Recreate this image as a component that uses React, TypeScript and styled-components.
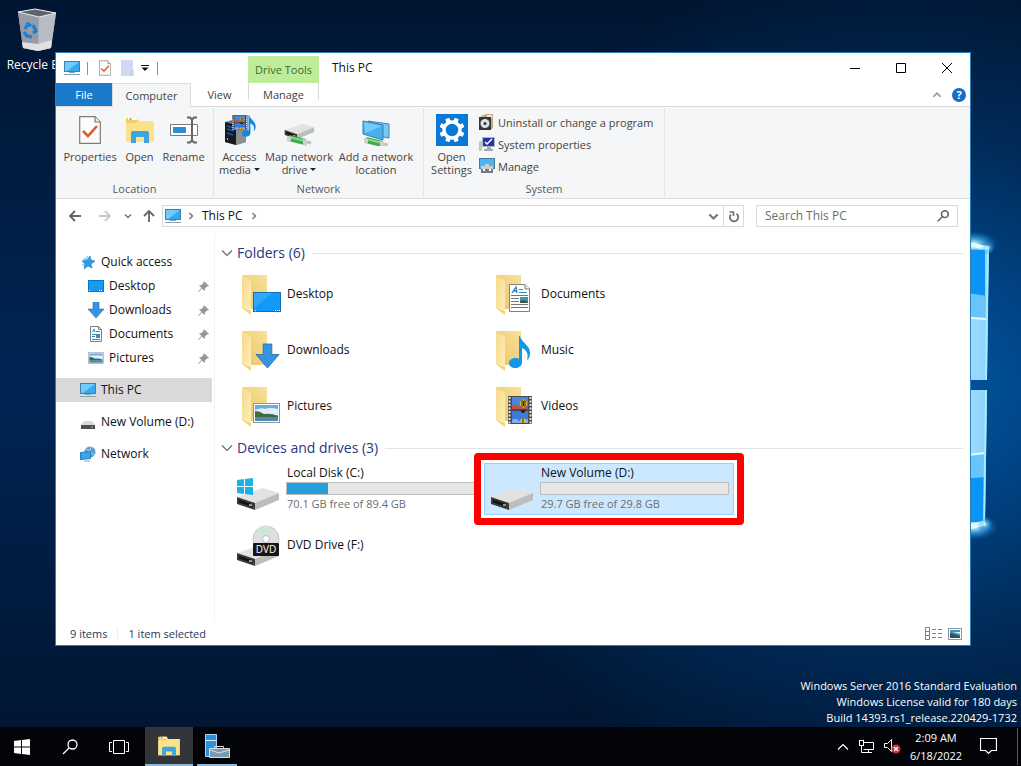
import React from "react";
import styled, { createGlobalStyle, css } from "styled-components";

const GlobalStyle = createGlobalStyle`
  *, *::before, *::after { box-sizing: border-box; }
  body { margin: 0; font-family: "Open Sans", "Noto Sans", sans-serif; font-size: 12px; color: #111; }
  button, input { font: inherit; color: inherit; }
  button { background: none; border: 0; padding: 0; cursor: default; }
  svg { display: block; flex: none; }
  a { color: inherit; text-decoration: none; }
  ul { list-style: none; margin: 0; padding: 0; }
`;

/* ---------- desktop ---------- */
const Desktop = styled.div`
  position: relative;
  display: flex;
  flex-direction: column;
  min-height: 100vh;
  overflow: hidden;
  background: #00152f;
`;
const WallpaperLayer = styled.svg`
  position: absolute;
  inset: 0;
  width: 100%;
  height: 100%;
`;
const DesktopShortcut = styled.button`
  position: absolute;
  left: 0;
  top: 7px;
  width: 76px;
  display: flex;
  flex-direction: column;
  align-items: center;
  gap: 4px;
  color: #fff;
  line-height: 16px;
  white-space: nowrap;
`;
const Watermark = styled.div`
  position: relative;
  height: 81px;
  padding: 32px 4px 0 0;
  text-align: right;
  color: #fff;
  font-size: 11px;
  line-height: 16px;
  p { margin: 0; }
`;

/* ---------- window frame ---------- */
const Window = styled.main`
  position: relative;
  flex: 1;
  display: flex;
  flex-direction: column;
  margin: 52px 50px 0 55px;
  border: 1px solid #2b7fb8;
  background: #fff;
`;
const TitleBar = styled.header`
  display: flex;
  height: 30px;
`;
const QuickTools = styled.div`
  display: flex;
  align-items: center;
  width: 192px;
  padding-left: 8px;
`;
const ToolButton = styled.button<{ $gap?: number }>`
  margin-left: ${(p) => p.$gap ?? 0}px;
`;
const ToolSeparator = styled.span<{ $gap: number }>`
  width: 1px;
  height: 13px;
  margin-left: ${(p) => p.$gap}px;
  background: #8f8f8f;
`;
const ContextLabel = styled.div`
  width: 71px;
  margin-top: 3px;
  background: #bdec9b;
  color: #3f6b2c;
  font-size: 11px;
  line-height: 28px;
  text-align: center;
  white-space: nowrap;
`;
const WindowTitle = styled.h1`
  flex: 1;
  margin: 0;
  padding-left: 13px;
  font-size: 12px;
  font-weight: 400;
  line-height: 30px;
  color: #111;
`;
const CaptionButton = styled.button`
  display: grid;
  place-items: center;
  width: 46px;
  height: 30px;
`;
const TabRow = styled.nav`
  display: flex;
  height: 24px;
  border-bottom: 1px solid #dadbdc;
  color: #444;
  font-size: 11px;
`;
const Tab = styled.button<{ $kind: "file" | "active" | "plain" | "context"; $width: number }>`
  width: ${(p) => p.$width}px;
  height: 24px;
  line-height: 24px;
  text-align: center;
  ${(p) => p.$kind === "file" && css`background: #1979ca; color: #fff; height: 23px;`}
  ${(p) =>
    p.$kind === "active" &&
    css`background: #f5f6f7; border: 1px solid #dadbdc; border-bottom: 0; line-height: 22px;`}
  ${(p) =>
    p.$kind === "context" &&
    css`display: flex; justify-content: center; height: 17px; border: solid #dadbdc; border-width: 0 1px;`}
`;
const TabTools = styled.div`
  display: flex;
  align-items: center;
  gap: 10px;
  margin-left: auto;
  padding-right: 4px;
`;

/* ---------- ribbon ---------- */
const Ribbon = styled.section`
  display: flex;
  height: 92px;
  padding: 1px 0;
  background: #f5f6f7;
  border-bottom: 1px solid #dadbdc;
  color: #444;
  font-size: 11px;
`;
const RibbonGroup = styled.div<{ $width: number }>`
  display: flex;
  flex-direction: column;
  width: ${(p) => p.$width}px;
  border-right: 1px solid #e2e3e4;
`;
const RibbonItems = styled.div`
  display: flex;
  flex: 1;
  padding: 6px 4px 0;
`;
const RibbonCaption = styled.div`
  line-height: 17px;
  color: #5a5a5a;
  text-align: center;
`;
const BigButton = styled.button<{ $width: number }>`
  display: flex;
  flex-direction: column;
  align-items: center;
  gap: 4px;
  width: ${(p) => p.$width}px;
  line-height: 13px;
  white-space: nowrap;
`;
const Caret = styled.span`
  display: inline-block;
  margin-left: 3px;
  border: 3px solid transparent;
  border-top-color: #222;
  border-bottom: 0;
  vertical-align: 3px;
`;
const SmallList = styled.div`
  display: flex;
  flex-direction: column;
  padding-left: 4px;
  margin-top: -3px;
`;
const SmallButton = styled.button`
  display: flex;
  align-items: center;
  gap: 3px;
  height: 22px;
  white-space: nowrap;
`;

/* ---------- address bar ---------- */
const AddressRow = styled.div`
  display: flex;
  align-items: center;
  height: 34px;
  padding: 0 12px 0 12px;
`;
const NavButtons = styled.div`
  display: flex;
  align-items: center;
  width: 94px;
`;
const NavButton = styled.button<{ $gap?: number }>`
  margin-left: ${(p) => p.$gap ?? 0}px;
`;
const AddressBox = styled.div`
  display: flex;
  flex: 1;
  align-items: center;
  height: 22px;
  border: 1px solid #d9d9d9;
`;
const Breadcrumb = styled.nav`
  display: flex;
  flex: 1;
  align-items: center;
`;
const Crumb = styled.a`
  margin: 0 7px 2px 4px;
`;
const AddressButton = styled.button<{ $width?: number; $divided?: boolean }>`
  display: grid;
  place-items: center;
  width: ${(p) => p.$width ?? 20}px;
  height: 20px;
  ${(p) => p.$divided && css`border-left: 1px solid #d9d9d9;`}
`;
const SearchBox = styled.label`
  display: flex;
  align-items: center;
  width: 202px;
  height: 22px;
  margin-left: 12px;
  padding: 0 8px 0 8px;
  border: 1px solid #d9d9d9;
`;
const SearchInput = styled.input`
  flex: 1;
  min-width: 0;
  padding: 0 0 2px;
  border: 0;
  outline: 0;
  background: none;
  &::placeholder { color: #6d6d6d; opacity: 1; }
`;

/* ---------- body ---------- */
const Body = styled.div`
  display: flex;
  flex: 1;
`;
const Sidebar = styled.nav`
  width: 159px;
  padding: 17px 2px 0 0;
  border-right: 1px solid #f3f3f3;
`;
const NavGroup = styled.ul`
  margin-bottom: 8px;
`;
const NavItem = styled.a<{ $indent?: boolean; $active?: boolean }>`
  display: flex;
  align-items: center;
  gap: 5px;
  height: 24px;
  padding: 0 3px 0 ${(p) => (p.$indent ? 32 : 24)}px;
  background: ${(p) => (p.$active ? "#d9d9d9" : "transparent")};
  white-space: nowrap;
`;
const NavLabel = styled.span`
  flex: 1;
  padding-bottom: 2px;
`;
const Listing = styled.section`
  flex: 1;
  padding: 8px 7px 0 6px;
`;
const GroupHeading = styled.h2`
  display: flex;
  align-items: center;
  height: 24px;
  margin: 0 0 3px;
  font-size: 14px;
  font-weight: 400;
  color: #26387f;
  white-space: nowrap;
  svg { margin-right: 4px; }
  &::after { content: ""; flex: 1; height: 1px; margin-left: 7px; background: #e2e2e2; }
`;
const HeadingText = styled.span`
  padding-bottom: 2px;
`;
const TileGrid = styled.div`
  display: grid;
  grid-template-columns: repeat(auto-fill, 250px);
  grid-auto-rows: 52px;
  gap: 4px;
  margin: 0 0 4px 9px;
`;
const Tile = styled.a<{ $selected?: boolean }>`
  position: relative;
  display: flex;
  align-items: center;
  gap: 3px;
  padding: 0 4px 0 5px;
  border: 1px solid ${(p) => (p.$selected ? "#99d1ff" : "transparent")};
  background: ${(p) => (p.$selected ? "#cce8ff" : "transparent")};
`;
const HighlightFrame = styled.span`
  position: absolute;
  inset: -11px;
  z-index: 1;
  border: 7px solid #fe0000;
  border-radius: 4px;
`;
const DriveInfo = styled.div`
  flex: 1;
  padding-bottom: 2px;
  line-height: 16px;
`;
const DriveName = styled.div`
  padding-left: 1px;
`;
const DriveBar = styled.div`
  height: 13px;
  margin: 1px 0;
  border: 1px solid #bcbcbc;
  background: #e6e6e6;
`;
const DriveFill = styled.div`
  height: 100%;
  background: #26a0da;
`;
const DriveSpace = styled.div`
  padding-left: 1px;
  font-size: 11px;
  color: #6d6d6d;
`;
const TileName = styled.span`
  padding: 0 0 2px 1px;
`;
const StatusBar = styled.footer`
  display: flex;
  align-items: center;
  height: 23px;
  padding: 0 8px 0 14px;
  color: #1e395b;
  font-size: 11px;
`;
const StatusText = styled.span<{ $divided?: boolean }>`
  line-height: 14px;
  ${(p) => p.$divided && css`margin-left: 10px; padding-left: 10px; border-left: 1px solid #eee;`}
`;
const ViewButtons = styled.div`
  display: flex;
  gap: 6px;
  margin-left: auto;
`;

/* ---------- taskbar ---------- */
const Taskbar = styled.footer`
  position: relative;
  display: flex;
  align-items: center;
  height: 39px;
  background: #020408;
  color: #fff;
`;
const TaskButton = styled.button<{ $width?: number; $active?: boolean; $running?: boolean }>`
  display: grid;
  place-items: center;
  width: ${(p) => p.$width ?? 48}px;
  height: 39px;
  ${(p) => p.$active && css`margin-left: 3px; background: #333538; border-bottom: 2px solid #8ab9dd;`}
  ${(p) =>
    p.$running &&
    css`background: linear-gradient(#8ab9dd, #8ab9dd) center bottom / 40px 2px no-repeat;`}
`;
const Tray = styled.div`
  display: flex;
  align-items: center;
  gap: 9px;
  height: 100%;
  margin-left: auto;
  padding-right: 2px;
`;
const Clock = styled.time`
  width: 52px;
  font-size: 11px;
  line-height: 18px;
  text-align: center;
  white-space: nowrap;
`;
const ActionButton = styled.button`
  margin: 0 11px 0 9px;
`;
const ShowDesktop = styled.button`
  width: 2px;
  height: 37px;
  border-left: 1px solid #55595e;
`;

/* ---------- drawings ---------- */
const Wallpaper = () => (
  <WallpaperLayer viewBox="0 0 1021 766" preserveAspectRatio="xMaxYMid slice" aria-hidden>
    <defs>
      <radialGradient id="glow" gradientUnits="userSpaceOnUse" cx="900" cy="385" r="520" gradientTransform="translate(0 77) scale(1 .8)">
        <stop offset="0" stopColor="#0062b0" />
        <stop offset=".3" stopColor="#00478a" />
        <stop offset=".6" stopColor="#002d5c" />
        <stop offset="1" stopColor="#001632" />
      </radialGradient>
      <linearGradient id="base" x1="0" x2="0" y1="0" y2="1">
        <stop offset="0" stopColor="#001632" />
        <stop offset=".5" stopColor="#002554" />
        <stop offset="1" stopColor="#00142e" />
      </linearGradient>
      <radialGradient id="flare">
        <stop offset="0" stopColor="#fff" />
        <stop offset=".25" stopColor="#7fd8ff" stopOpacity=".85" />
        <stop offset="1" stopColor="#0080e0" stopOpacity="0" />
      </radialGradient>
      <linearGradient id="pane" x1="0" x2="1" y1="0" y2="0">
        <stop offset="0" stopColor="#a9e0ff" />
        <stop offset="1" stopColor="#8ad3fd" />
      </linearGradient>
    </defs>
    <rect width="1021" height="766" fill="url(#base)" />
    <ellipse cx="900" cy="385" rx="520" ry="416" fill="url(#glow)" opacity=".9" />
    <ellipse cx="974" cy="244" rx="24" ry="13" fill="url(#flare)" />
    <ellipse cx="974" cy="527" rx="24" ry="13" fill="url(#flare)" />
    <path d="M960 241 989 247 987 380H960Z" fill="url(#pane)" />
    <path d="M960 249 985 250V296L960 292Z" fill="#0b93f5" />
    <path d="M960 292 986 296V319L960 317Z" fill="#68c5fb" />
    <path d="M960 317 986 319" stroke="#e4fbff" strokeWidth="2" />
    <path d="M960 243 988 248" fill="none" stroke="#e6fbff" strokeWidth="4" />
    <path d="M988 247 987 300 986 380" fill="none" stroke="#a9eaff" strokeWidth="2" />
    <path d="M960 390H987L985 525 960 530Z" fill="url(#pane)" />
    <path d="M960 456 985 453V477L960 479Z" fill="#68c5fb" />
    <path d="M960 479 985 477V522H960Z" fill="#0b93f5" />
    <path d="M960 456 985 453" stroke="#e4fbff" strokeWidth="2" />
    <path d="M986 390 985 460 984 524" fill="none" stroke="#a9eaff" strokeWidth="2" />
    <path d="M985 523 960 529" fill="none" stroke="#e6fbff" strokeWidth="5" />
    <circle cx="988" cy="248" r="7" fill="url(#flare)" opacity=".7" />
    <circle cx="985" cy="524" r="8" fill="url(#flare)" opacity=".8" />
  </WallpaperLayer>
);

const RecycleBin = () => (
  <svg width="42" height="46" viewBox="2 0 42 46">
    <path d="M3 5 20 2 41 6 36 41 23 44 8 41Z" fill="#a4abb4" />
    <path d="M3 5 24 10 23 44 8 41Z" fill="#959ca7" />
    <path d="M24 10 41 6 36 41 23 44Z" fill="#b7bcc2" />
    <path d="M7 35 23 37 37 33 36 41 23 44 8 41Z" fill="#dfe0df" />
    <path d="M3 5 20 2 41 6 24 10Z" fill="#5d646d" stroke="#e9ecef" />
    <g fill="none" stroke="#1d80d2" strokeWidth="3.4">
      <path d="m10 22 3-5 3 2M18 18l3 6-3 2M17 30l-5-1-3-4" />
    </g>
  </svg>
);

const Monitor = ({ size = 16 }: { size?: number }) => (
  <svg width={size} height={size} viewBox="0 0 16 16">
    <rect x=".5" y="1.5" width="15" height="10" fill="#35a9f0" stroke="#3f7fa8" />
    <path d="M1 2h14L3 11H1Z" fill="#6fcbfb" />
    <path d="M5 12.500h6M0 14.500h16" stroke="#8aa4b4" />
  </svg>
);

const CheckPage = ({ w, h }: { w: number; h: number }) => (
  <svg width={w} height={h} viewBox="0 0 22 28">
    <path d="M.7.7H16L21.3 6v21.3H.7Z" fill="#fcfcfc" stroke="#7c7c7c" strokeWidth="1.2" />
    <path d="M16 .7V6h5.3" fill="#eee" stroke="#7c7c7c" strokeWidth="1.2" />
    <path d="m4 15 5 5 9-10" fill="none" stroke="#d9602b" strokeWidth="2.6" />
  </svg>
);

const NewFolder = () => (
  <svg width="13" height="16" viewBox="0 0 13 16">
    <path d="M0 0h12v10h1v6H0Z" fill="#cfdcf0" />
    <path d="M10 10v6" stroke="#b9cbe6" />
  </svg>
);

const Explorer = ({ w, h }: { w: number; h: number }) => (
  <svg width={w} height={h} viewBox="0 0 28 26">
    <path d="M0 1h11l2 3h15v21H0Z" fill="#f3cf62" />
    <path d="M2 1h9v2H2Z" fill="#fff" />
    <path d="M3 2h3" stroke="#3a9c5e" />
    <path d="M0 6h10l2-2h16v21H0Z" fill="#fde28d" />
    <path d="M5 26V16q0-2 2-2h14q2 0 2 2v10h-5v-6h-8v6Z" fill="#3fa5d8" />
  </svg>
);

const RenameIcon = () => (
  <svg width="30" height="32" viewBox="0 0 30 32">
    <path d="M1.500 10.500h27v11h-27Z" fill="#fff" stroke="#7b7b7b" />
    <rect x="4" y="13" width="13" height="6" fill="#2b8fd6" />
    <path d="M18 3.500h3l2 2 2-2h3M18 28.500h3l2-2 2 2h3M23 5v22" fill="none" stroke="#666" strokeWidth="2" />
  </svg>
);

const MusicNote = ({ fill = "#1297e8" }: { fill?: string }) => (
  <path d="M11 0c1 6 10 9 10 17 0 3-1 6-3 7 2-7-1-10-5-12v14c0 4-3 6-7 6-3 0-6-2-6-5s3-5 7-5c1 0 2 0 3 1V0Z" fill={fill} />
);

const FilmStrip = () => (
  <>
    <rect width="24" height="28" fill="#4a4b4d" />
    <path d="M1.500 1v27M22.500 1v27" stroke="#e6e6e6" strokeWidth="2" strokeDasharray="2 1.500" />
    <rect x="4" y="1" width="16" height="12" fill="#4a86e0" />
    <rect x="4" y="15" width="16" height="12" fill="#3b7ae0" />
    <path d="M4 9q4-2 8 2l8-1v3H4Z" fill="#bf514f" />
    <path d="M4 24q4-3 7 1l9-2v4H4Z" fill="#85aee8" />
    <ellipse cx="15.500" cy="7.500" rx="3.500" ry="4" fill="#f0c022" />
    <path d="M14 4v7M17 4v7M15.500 5v5" stroke="#34220d" />
    <path d="M12 14h6l-2 3h-2Z" fill="#34220d" />
    <circle cx="15" cy="24.500" r="2.500" fill="#efc02a" />
    <path d="M15 22v5" stroke="#34220d" />
  </>
);

const AccessMedia = () => (
  <svg width="32" height="32" viewBox="0 0 32 32">
    <path d="M1 8 12 5 22 8V28L12 31 1 28Z" fill="#6f7277" />
    <path d="M1 8 12 11V31L1 28Z" fill="#17191e" />
    <path d="M12 11 22 8V28L12 31Z" fill="#8c9095" />
    <path d="m3 12 7 2M3 15l7 2M3 19l6 2" stroke="#1659c8" strokeWidth="1.500" />
    <path d="M3 25h1" stroke="#41dbff" strokeWidth="2" />
    <g transform="translate(8 1) scale(.65 .54)"><FilmStrip /></g>
    <g transform="translate(18 1) scale(.65 .68)"><MusicNote fill="#1687df" /></g>
  </svg>
);

const DriveShape = () => (
  <>
    <path d="M1 20 27 11 43 16 19 27Z" fill="#e2e2e2" />
    <path d="M1 20 19 26v7L1 27Z" fill="#3a3a3a" />
    <path d="m19 26 24-10v7L19 33Z" fill="#bdbdbd" />
    <path d="m3 22.500 13 4.500v3L3 25.500Z" fill="#141414" />
    <path d="M13 28h3" stroke="#58b868" strokeWidth="2" />
  </>
);

const NetPipe = () => (
  <g>
    <path d="M5 23 21 27" stroke="#3fa850" strokeWidth="6" />
    <path d="M5 22 21 26" stroke="#86d88e" strokeWidth="2" />
    <path d="m3 21 4 1v5l-4-1ZM19 24l4 1v6l-4-1Z" fill="#c9d2cc" />
    <path d="m23 27 4 1" stroke="#bcc6bf" strokeWidth="3" />
  </g>
);

const MapDrive = () => (
  <svg width="34" height="32" viewBox="0 0 34 32">
    <g transform="translate(2 2) scale(.7)"><DriveShape /></g>
    <g transform="translate(2 1)"><NetPipe /></g>
  </svg>
);

const NetLocation = () => (
  <svg width="32" height="32" viewBox="0 0 32 32">
    <path d="m8 7 21 3v14L8 20Z" fill="#79caf5" stroke="#3689b8" />
    <path d="m3 7 20 4v15L3 20Z" fill="#49b0ee" stroke="#2f7fad" />
    <path d="m4 8 18 4L5 19Z" fill="#76cbf7" />
    <g transform="translate(1 3)"><NetPipe /></g>
  </svg>
);

const SettingsGear = () => (
  <svg width="32" height="32" viewBox="0 0 32 32">
    <rect width="32" height="32" fill="#0a78d6" />
    <circle cx="16" cy="16" r="8" fill="none" stroke="#fff" strokeWidth="3.500" />
    {[0, 45, 90, 135, 180, 225, 270, 315].map((a) => (
      <path key={a} d="M13.500 8 14 3.500h4L18.500 8Z" fill="#fff" transform={`rotate(${a + 22.5} 16 16)`} />
    ))}
  </svg>
);

const UninstallIcon = () => (
  <svg width="16" height="16" viewBox="0 0 16 16">
    <path d="M2 2 7 0h7v14l-3 2Z" fill="#c9a877" />
    <path d="M8 1h5v3H8Z" fill="#dfeef6" />
    <rect x="0" y="3" width="12" height="13" fill="#343638" />
    <circle cx="6" cy="9.500" r="4.500" fill="#dfe2e4" />
    <circle cx="6" cy="9.500" r="1.500" fill="#333" />
  </svg>
);
const SystemIcon = () => (
  <svg width="16" height="16" viewBox="0 0 16 16">
    <rect x="0" y="5" width="3" height="10" fill="#c1c4c8" />
    <rect x="3.500" y="1.500" width="12" height="9" fill="#2634a5" stroke="#b5bac2" />
    <path d="m6 6 2 2 5-5" fill="none" stroke="#fff" strokeWidth="1.500" />
    <path d="M8 11h4v2h2v2H5v-2h3Z" fill="#a6a9b0" />
  </svg>
);
const ManageIcon = () => (
  <svg width="16" height="16" viewBox="0 0 16 16">
    <rect x=".5" y=".5" width="15" height="10" fill="#4db5ed" stroke="#457b9c" />
    <path d="M2 8h12v7H2Z" fill="#737b82" />
    <path d="M2 8h12v3H2ZM6 6h4v2H6Z" fill="#c7cdd1" />
    <path d="M5 11v2M11 11v2" stroke="#fff" strokeWidth="2" />
  </svg>
);

const Arrow = ({ turn = 0, color = "#666" }: { turn?: number; color?: string }) => (
  <svg width="14" height="14" viewBox="0 0 14 14">
    <path d="M13 7H2M7 2 2 7l5 5" fill="none" stroke={color} strokeWidth="1.800" transform={`rotate(${turn} 7 7)`} />
  </svg>
);
const Chevron = ({ w = 8, turn = 0, color = "#777", weight = 1.5 }: { w?: number; turn?: number; color?: string; weight?: number }) => (
  <svg width={w} height={w} viewBox="0 0 8 8">
    <path d="m1 2.500 3 3 3-3" fill="none" stroke={color} strokeWidth={weight} transform={`rotate(${turn} 4 4)`} />
  </svg>
);
const WideChevron = ({ turn = 0, color = "#6b6b6b" }: { turn?: number; color?: string }) => (
  <svg width="12" height="8" viewBox="0 0 12 8">
    <path d="m1 1.500 5 5 5-5" fill="none" stroke={color} strokeWidth="1.200" transform={`rotate(${turn} 6 4)`} />
  </svg>
);
const Refresh = () => (
  <svg width="12" height="13" viewBox="0 0 12 13">
    <path d="M2.800 4.500a4.200 4.200 0 1 0 5.700-.8" fill="none" stroke="#707070" strokeWidth="1.800" />
    <path d="M1.500 2h4v4" fill="none" stroke="#707070" strokeWidth="1.600" />
  </svg>
);
const Magnifier = ({ size, color, weight }: { size: number; color: string; weight: number }) => (
  <svg width={size} height={size} viewBox="0 0 16 16">
    <circle cx="10.500" cy="5.500" r="4.500" fill="none" stroke={color} strokeWidth={weight} />
    <path d="M7 9 1 15" stroke={color} strokeWidth={weight} />
  </svg>
);

const Star = () => (
  <svg width="16" height="16" viewBox="0 0 16 16">
    <path d="m10 2 1 4 4 1-4 3 1 4-4-2-4 3 1-5-3-3 5-1Z" fill="#2d9be6" stroke="#1e7dc4" strokeWidth=".6" />
    <path d="M3 5h4M2 11h3M6 3h2" stroke="#4aaced" />
  </svg>
);
const DesktopIcon = () => (
  <svg width="16" height="16" viewBox="0 0 16 16">
    <rect x=".5" y="2.500" width="15" height="11" fill="#169bf5" stroke="#0f74bd" />
    <path d="M1 12.500h1M11 12.500h4" stroke="#fff" strokeDasharray="1 1" />
  </svg>
);
const DownArrow = () => <path d="M5 0h6v7h5l-8 9-8-9h5Z" fill="#3794e0" stroke="#2b6fae" strokeWidth=".6" />;
const DocPage = () => (
  <>
    <path d="M.5.5H16L20.500 5v22.500H.5Z" fill="#fdfdfd" stroke="#7d8285" />
    <path d="M16 .5V5h4.500" fill="#eee" stroke="#7d8285" />
    <path d="m3 9 4-6 1 6M4 7h4" fill="none" stroke="#2485bd" strokeWidth="1.300" />
    <path d="M10 5.500h4M10 8.500h8M2 11.500h17" stroke="#2b8ebb" />
    <path d="M2 14.500h8M2 17.500h8M2 20.500h17M2 23.500h17" stroke="#777" />
    <rect x="11" y="13" width="8" height="6" fill="#4390b8" />
    <path d="m11 17 4-1 4 2v1h-8Z" fill="#3b5d40" />
  </>
);
const SmallDoc = () => (
  <svg width="16" height="16" viewBox="0 0 16 16">
    <path d="M2.500.5h8l3 3v12h-11Z" fill="#fdfdfd" stroke="#7d8285" />
    <path d="M10.500.5v3h3" fill="none" stroke="#7d8285" />
    <path d="m4.500 6 1.500-3 1 3M8 5.500h4M4 8.500h8M4 10.500h3M4 13.500h8" fill="none" stroke="#2b8ebb" />
    <rect x="8" y="9" width="4" height="3" fill="#4390b8" />
  </svg>
);
const Photo = () => (
  <>
    <rect x=".5" y=".5" width="26" height="19" fill="#fff" stroke="#8596a3" />
    <rect x="2" y="2" width="23" height="16" fill="#6fa9e6" />
    <path d="M2 7q6-3 10-1 5-2 13 0v6H2Z" fill="#e2eff9" />
    <path d="M2 8q5 0 9 3 7-1 14 2v1H2Z" fill="#3f6b41" />
    <path d="M2 14h23v4H2Z" fill="#5687a6" />
  </>
);
const MiniSvg = ({ box, children }: { box: string; children: React.ReactNode }) => (
  <svg width="16" height="16" viewBox={box}>{children}</svg>
);
const MiniDrive = () => (
  <svg width="16" height="16" viewBox="0 0 16 16">
    <path d="M4 7h8l3 4H1Z" fill="#d9d9d9" />
    <path d="M1 11h14v4H1Z" fill="#4b4e50" />
    <path d="M11 13h2" stroke="#5fe07a" />
  </svg>
);
const NetworkIcon = () => (
  <svg width="16" height="16" viewBox="0 0 16 16">
    <circle cx="10" cy="6" r="5.500" fill="#5a9fc9" />
    <path d="M6 3q4 2 8 6M11 1q-3 4 0 9" stroke="#b4d9ec" fill="none" />
    <path d="m.5 6.500 10-1v7l-10 1Z" fill="#37a6ee" stroke="#2b7fb5" />
    <path d="M4 15h6" stroke="#8aa4b4" />
  </svg>
);
const Pin = () => (
  <svg width="11" height="11" viewBox="0 0 11 11">
    <path d="m6 0 5 5-2 .5-2 2L6.500 10 4 7.500.500 11 0 10.500 3.500 7 1 4.500 3.500 4l2-2Z" fill="#8c979f" />
  </svg>
);

const FolderTile = ({ kind }: { kind: string }) => (
  <svg width="47" height="48" viewBox="-1 0 47 48">
    <defs>
      <linearGradient id={`back-${kind}`} x1="0" x2="1" y1="1" y2="0">
        <stop offset="0" stopColor="#e9c665" />
        <stop offset="1" stopColor="#f9e09a" />
      </linearGradient>
      <linearGradient id={`flap-${kind}`} x1="0" x2="1" y1="0" y2="1">
        <stop offset="0" stopColor="#f6d988" />
        <stop offset="1" stopColor="#fff0bd" />
      </linearGradient>
    </defs>
    <path d="M5 5h25v34H13Z" fill={`url(#back-${kind})`} />
    <path d="M5 5 14 11v34L5 38Z" fill={`url(#flap-${kind})`} />
    <path d="m5 38 9 7v-4Z" fill="#f3d37f" />
    {kind === "Desktop" && (
      <>
        <rect x="16.500" y="22.500" width="27" height="19" fill="#129afa" stroke="#1372ad" />
        <path d="M17 23h18L17 38Z" fill="#2ea8ff" />
        <path d="M18 40.500h1M38 40.500h5" stroke="#fff" strokeDasharray="1 1" />
      </>
    )}
    {kind === "Downloads" && <g transform="translate(19 18) scale(1.440 1.500)"><DownArrow /></g>}
    {kind === "Pictures" && <g transform="translate(16 21)"><Photo /></g>}
    {kind === "Documents" && <g transform="translate(18 14)"><DocPage /></g>}
    {kind === "Music" && <g transform="translate(18 10)"><MusicNote /></g>}
    {kind === "Videos" && <g transform="translate(17 14)"><FilmStrip /></g>}
  </svg>
);

const DriveTile = ({ kind }: { kind: "windows" | "plain" | "dvd" }) => (
  <svg width="47" height="48" viewBox="0 0 47 48">
    <g transform="translate(0 12)"><DriveShape /></g>
    {kind === "windows" && (
      <path d="m1 15 7-1v7H1ZM9 14l8-1v8H9ZM1 22h7v7l-7-1ZM9 22h8v8l-8-1Z" fill="#17b3e8" />
    )}
    {kind === "dvd" && (
      <>
        <circle cx="30" cy="18" r="13" fill="#dedfe0" stroke="#c4c6c8" />
        <path d="M30 18 21 8q8-6 15-1Z" fill="#cbe8d8" />
        <circle cx="30" cy="18" r="3.500" fill="#fff" stroke="#b7bbbd" />
        <rect x="17" y="22" width="26" height="13" rx="1" fill="#161616" />
        <text x="30" y="32" fontSize="10" fill="#fff" textAnchor="middle">DVD</text>
      </>
    )}
  </svg>
);

const DetailsView = () => (
  <svg width="17" height="13" viewBox="0 0 17 13">
    <path d="M.5.500h4v12h-4ZM.5 4.500h4M.5 8.500h4" fill="none" stroke="#7e7e7e" />
    <path d="M7 2.500h10M7 6.500h10M7 10.500h10" stroke="#7e7e7e" strokeDasharray="4 2" />
  </svg>
);
const TilesView = () => (
  <svg width="14" height="12" viewBox="0 0 14 12">
    <rect x=".5" y=".5" width="13" height="11" fill="#fff" stroke="#8b959c" />
    <rect x="2" y="2" width="10" height="8" fill="#3f93bd" />
    <path d="m2 5 10 3v2H2Z" fill="#31545f" />
    <path d="M5 4h7v2Z" fill="#e1f1f7" />
  </svg>
);

const StartLogo = () => (
  <svg width="16" height="16" viewBox="0 0 16 16">
    <path d="m0 2 7-1v6.500H0ZM8 1l8-1v7.500H8ZM0 8.500h7V15l-7-1ZM8 8.500h8V16l-8-1Z" fill="#fff" />
  </svg>
);
const TaskView = () => (
  <svg width="20" height="14" viewBox="0 0 20 14">
    <path d="M4.500.5h11v13h-11ZM3 2.500H.5v9H3M17 2.500h2.500v9H17" fill="none" stroke="#fff" />
  </svg>
);
const ServerManager = () => (
  <svg width="26" height="25" viewBox="0 0 26 25">
    <path d="M1.500.5h11v22h-11Z" fill="#2b91d8" stroke="#a8d5f3" />
    <path d="M2 6.500h10M6 14.500h6" stroke="#d7edfb" />
    <path d="M10.500 14.500v-2h9v2" fill="none" stroke="#d8e0e5" />
    <path d="M5.500 14.500h20v9h-20Z" fill="#7a9bb0" stroke="#d8e0e5" />
    <path d="m6 16 9 3 10-3" fill="none" stroke="#d8e0e5" />
  </svg>
);
const EthernetIcon = () => (
  <svg width="17" height="14" viewBox="0 0 17 14">
    <path d="M4 2.500h11.500v7h-10M10.500 9.500v3M7 12.500h7M3.500 6v6.500H7" fill="none" stroke="#fff" />
    <rect x="1.500" y=".5" width="4" height="5" fill="#020408" stroke="#fff" />
  </svg>
);
const MutedIcon = () => (
  <svg width="17" height="15" viewBox="0 0 17 15">
    <path d="M.5 4.500h3l4-4v12l-4-4h-3Z" fill="none" stroke="#fff" />
    <circle cx="12" cy="10" r="4.500" fill="#c6313c" />
    <path d="m10 8 4 4m0-4-4 4" stroke="#fff" strokeWidth="1.200" />
  </svg>
);
const ActionCenter = () => (
  <svg width="17" height="17" viewBox="0 0 17 17">
    <path d="M.5.500h16v12h-5l-3 3-3-3h-5Z" fill="none" stroke="#fff" strokeWidth="1.200" />
  </svg>
);

/* ---------- content ---------- */
const quickLinks = [
  { name: "Desktop", icon: <DesktopIcon /> },
  { name: "Downloads", icon: <MiniSvg box="0 0 16 16"><DownArrow /></MiniSvg> },
  { name: "Documents", icon: <SmallDoc /> },
  { name: "Pictures", icon: <MiniSvg box="0 -4 27 28"><Photo /></MiniSvg> },
];
const folders = ["Desktop", "Documents", "Downloads", "Music", "Pictures", "Videos"];

const Drive = (p: { kind: "windows" | "plain"; name: string; space: string; used: number; selected?: boolean }) => (
  <Tile href="#" $selected={p.selected}>
    <DriveTile kind={p.kind} />
    <DriveInfo>
      <DriveName>{p.name}</DriveName>
      <DriveBar><DriveFill style={{ width: `${p.used}%` }} /></DriveBar>
      <DriveSpace>{p.space}</DriveSpace>
    </DriveInfo>
    {p.selected && <HighlightFrame />}
  </Tile>
);

export default function App() {
  return (
    <>
      <GlobalStyle />
      <Desktop>
        <Wallpaper />
        <DesktopShortcut><RecycleBin />Recycle Bin</DesktopShortcut>
        <Window>
          <TitleBar>
            <QuickTools>
              <Monitor />
              <ToolSeparator $gap={7} />
              <ToolButton $gap={11} aria-label="Properties"><CheckPage w={12} h={16} /></ToolButton>
              <ToolButton $gap={10} aria-label="New folder"><NewFolder /></ToolButton>
              <ToolButton $gap={7} aria-label="Customize toolbar">
                <svg width="8" height="6" viewBox="0 0 8 6"><path d="M0 .5h8" stroke="#111" /><path d="M.5 2.500h7L4 6Z" fill="#111" /></svg>
              </ToolButton>
              <ToolSeparator $gap={8} />
            </QuickTools>
            <ContextLabel>Drive Tools</ContextLabel>
            <WindowTitle>This PC</WindowTitle>
            <CaptionButton aria-label="Minimize"><svg width="10" height="10"><path d="M0 5.500h10" stroke="#000" /></svg></CaptionButton>
            <CaptionButton aria-label="Maximize"><svg width="10" height="10"><path d="M.5.500h9v9h-9Z" fill="none" stroke="#000" /></svg></CaptionButton>
            <CaptionButton aria-label="Close"><svg width="10" height="10"><path d="m0 0 10 10M10 0 0 10" stroke="#000" /></svg></CaptionButton>
          </TitleBar>
          <TabRow>
            <Tab $kind="file" $width={56}>File</Tab>
            <Tab $kind="active" $width={79}>Computer</Tab>
            <Tab $kind="plain" $width={57}>View</Tab>
            <Tab $kind="context" $width={71}>Manage</Tab>
            <TabTools>
              <button aria-label="Collapse ribbon"><Chevron w={10} turn={180} color="#9a9a9a" weight={1.2} /></button>
              <button aria-label="Help">
                <svg width="14" height="14" viewBox="0 0 14 14">
                  <circle cx="7" cy="7" r="7" fill="#1370c4" />
                  <text x="7" y="11" fontSize="11" fontWeight="700" fill="#fff" textAnchor="middle">?</text>
                </svg>
              </button>
            </TabTools>
          </TabRow>
          <Ribbon>
            <RibbonGroup $width={158}>
              <RibbonItems>
                <BigButton $width={60}>
                  <svg width="22" height="32" viewBox="0 0 22 32"><g transform="translate(0 2)"><CheckPage w={22} h={28} /></g></svg>
                  Properties
                </BigButton>
                <BigButton $width={39}>
                  <svg width="28" height="32" viewBox="0 0 28 32"><g transform="translate(0 3)"><Explorer w={28} h={26} /></g></svg>
                  Open
                </BigButton>
                <BigButton $width={49}><RenameIcon />Rename</BigButton>
              </RibbonItems>
              <RibbonCaption>Location</RibbonCaption>
            </RibbonGroup>
            <RibbonGroup $width={210}>
              <RibbonItems>
                <BigButton $width={43}><AccessMedia /><span>Access<br />media<Caret /></span></BigButton>
                <BigButton $width={76}><MapDrive /><span>Map network<br />drive<Caret /></span></BigButton>
                <BigButton $width={78}><NetLocation /><span>Add a network<br />location</span></BigButton>
              </RibbonItems>
              <RibbonCaption>Network</RibbonCaption>
            </RibbonGroup>
            <RibbonGroup $width={241}>
              <RibbonItems>
                <BigButton $width={47}><SettingsGear /><span>Open<br />Settings</span></BigButton>
                <SmallList>
                  <SmallButton><UninstallIcon />Uninstall or change a program</SmallButton>
                  <SmallButton><SystemIcon />System properties</SmallButton>
                  <SmallButton><ManageIcon />Manage</SmallButton>
                </SmallList>
              </RibbonItems>
              <RibbonCaption>System</RibbonCaption>
            </RibbonGroup>
          </Ribbon>
          <AddressRow>
            <NavButtons>
              <NavButton aria-label="Back"><Arrow /></NavButton>
              <NavButton $gap={16} aria-label="Forward"><Arrow turn={180} color="#c8c8c8" /></NavButton>
              <NavButton $gap={12} aria-label="Recent locations"><Chevron /></NavButton>
              <NavButton $gap={10} aria-label="Up"><Arrow turn={90} /></NavButton>
            </NavButtons>
            <AddressBox>
              <Breadcrumb>
                <AddressButton aria-label="Location"><Monitor /></AddressButton>
                <AddressButton $width={15} aria-label="Expand"><Chevron turn={-90} /></AddressButton>
                <Crumb href="#">This PC</Crumb>
                <Chevron turn={-90} />
              </Breadcrumb>
              <AddressButton aria-label="Previous locations"><Chevron w={11} weight={1.6} /></AddressButton>
              <AddressButton $divided aria-label="Refresh"><Refresh /></AddressButton>
            </AddressBox>
            <SearchBox>
              <SearchInput aria-label="Search This PC" placeholder="Search This PC" />
              <Magnifier size={12} color="#666" weight={2.2} />
            </SearchBox>
          </AddressRow>
          <Body>
            <Sidebar>
              <NavGroup>
                <li><NavItem href="#"><Star /><NavLabel>Quick access</NavLabel></NavItem></li>
                {quickLinks.map((q) => (
                  <li key={q.name}><NavItem href="#" $indent>{q.icon}<NavLabel>{q.name}</NavLabel><Pin /></NavItem></li>
                ))}
              </NavGroup>
              <NavGroup><li><NavItem href="#" $active><Monitor /><NavLabel>This PC</NavLabel></NavItem></li></NavGroup>
              <NavGroup><li><NavItem href="#"><MiniDrive /><NavLabel>New Volume (D:)</NavLabel></NavItem></li></NavGroup>
              <NavGroup><li><NavItem href="#"><NetworkIcon /><NavLabel>Network</NavLabel></NavItem></li></NavGroup>
            </Sidebar>
            <Listing>
              <GroupHeading><WideChevron /><HeadingText>Folders (6)</HeadingText></GroupHeading>
              <TileGrid>
                {folders.map((f) => (
                  <Tile href="#" key={f}><FolderTile kind={f} /><TileName>{f}</TileName></Tile>
                ))}
              </TileGrid>
              <GroupHeading><WideChevron /><HeadingText>Devices and drives (3)</HeadingText></GroupHeading>
              <TileGrid>
                <Drive kind="windows" name="Local Disk (C:)" space="70.1 GB free of 89.4 GB" used={22} />
                <Drive kind="plain" name="New Volume (D:)" space="29.7 GB free of 29.8 GB" used={0} selected />
                <Tile href="#"><DriveTile kind="dvd" /><TileName>DVD Drive (F:)</TileName></Tile>
              </TileGrid>
            </Listing>
          </Body>
          <StatusBar>
            <StatusText>9 items</StatusText>
            <StatusText $divided>1 item selected</StatusText>
            <ViewButtons>
              <button aria-label="Details view"><DetailsView /></button>
              <button aria-label="Tiles view"><TilesView /></button>
            </ViewButtons>
          </StatusBar>
        </Window>
        <Watermark>
          <p>Windows Server 2016 Standard Evaluation</p>
          <p>Windows License valid for 180 days</p>
          <p>Build 14393.rs1_release.220429-1732</p>
        </Watermark>
        <Taskbar>
          <TaskButton $width={44} aria-label="Start"><StartLogo /></TaskButton>
          <TaskButton $width={52} aria-label="Search"><Magnifier size={16} color="#fff" weight={1.3} /></TaskButton>
          <TaskButton $width={46} aria-label="Task view"><TaskView /></TaskButton>
          <TaskButton $active aria-label="File Explorer"><Explorer w={22} h={20} /></TaskButton>
          <TaskButton $running aria-label="Server Manager"><ServerManager /></TaskButton>
          <Tray>
            <button aria-label="Hidden icons"><WideChevron turn={180} color="#fff" /></button>
            <EthernetIcon />
            <MutedIcon />
            <Clock>2:09 AM<br />6/18/2022</Clock>
            <ActionButton aria-label="Notifications"><ActionCenter /></ActionButton>
            <ShowDesktop aria-label="Show desktop" />
          </Tray>
        </Taskbar>
      </Desktop>
    </>
  );
}
